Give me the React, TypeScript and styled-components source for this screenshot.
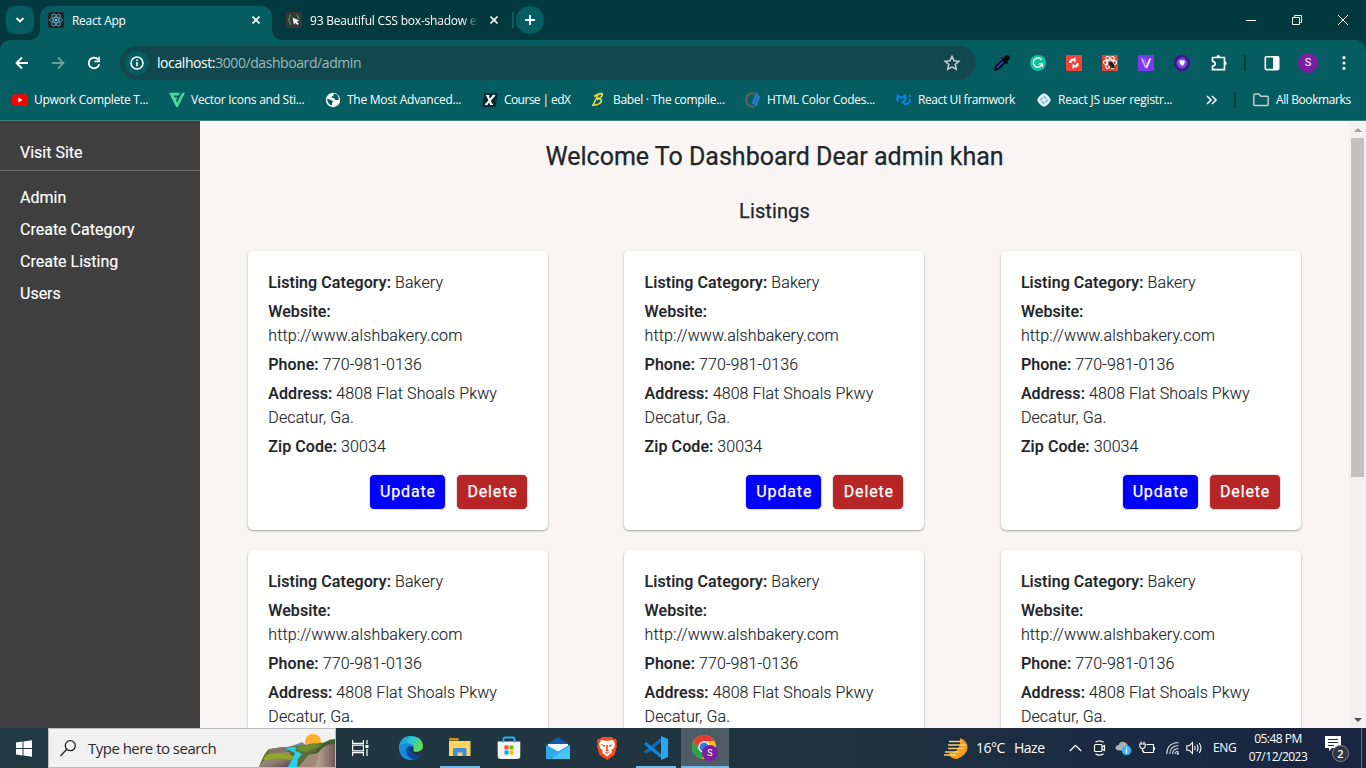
import React from "react";
import styled, { createGlobalStyle } from "styled-components";

const GlobalStyle = createGlobalStyle`
  *, *::before, *::after { box-sizing: border-box; }
  html, body { margin: 0; padding: 0; overflow: hidden; }
  p, h1, h2 { margin: 0; }
  svg { display: block; flex: none; }
`;

const ui = `"Open Sans", "Noto Sans", sans-serif`;

const Screen = styled.div`
  width: 1366px;
  height: 768px;
  display: flex;
  flex-direction: column;
  overflow: hidden;
  font-family: ${ui};
`;

/* ---------- browser chrome ---------- */

const TabStrip = styled.div`
  height: 40px;
  flex: none;
  display: flex;
  background: #02393e;
`;

const TabSearch = styled.div`
  width: 28px;
  height: 28px;
  margin: 6px 6px 0;
  border-radius: 9px;
  background: #055c61;
  display: grid;
  place-items: center;
`;

const Tab = styled.div<{ $active?: boolean; $width: number }>`
  position: relative;
  width: ${(p) => p.$width}px;
  height: ${(p) => (p.$active ? 34 : 28)}px;
  margin-top: 6px;
  padding: ${(p) => (p.$active ? "0 12px 0 8px" : "0 8px 0 14px")};
  display: flex;
  align-items: flex-start;
  border-radius: 10px 10px 0 0;
  background: ${(p) => (p.$active ? "#055c61" : "transparent")};
  color: #fff;
  ${(p) =>
    p.$active &&
    `
  &::before, &::after {
    content: "";
    position: absolute;
    bottom: 0;
    width: 10px;
    height: 10px;
  }
  &::before {
    left: -10px;
    background: radial-gradient(circle at 0 0, transparent 9.5px, #055c61 10px);
  }
  &::after {
    right: -10px;
    background: radial-gradient(circle at 100% 0, transparent 9.5px, #055c61 10px);
  }`}
  > svg { margin-top: 6px; }
`;

const TabTitle = styled.span<{ $fade?: boolean; $spacing: number }>`
  flex: 1;
  margin-left: 8px;
  height: 28px;
  line-height: 29px;
  font-size: 12px;
  letter-spacing: ${(p) => p.$spacing}px;
  white-space: nowrap;
  overflow: hidden;
  ${(p) => p.$fade && `mask-image: linear-gradient(90deg, #000 152px, transparent 169px);`}
`;

const TabDivider = styled.i`
  width: 2px;
  height: 16px;
  margin: 12px 2px 0 6px;
  background: #055c61;
`;

const NewTab = styled.div`
  width: 28px;
  height: 28px;
  margin-top: 6px;
  border-radius: 50%;
  background: #055c61;
  display: grid;
  place-items: center;
`;

const WindowButtons = styled.div`
  margin-left: auto;
  display: flex;
`;

const WindowButton = styled.div`
  width: 46px;
  height: 40px;
  display: grid;
  place-items: center;
`;

const ToolbarBack = styled.div`
  flex: none;
  background: #02393e;
`;

const Toolbar = styled.div`
  height: 46px;
  display: flex;
  align-items: center;
  background: #055c61;
  border-radius: 10px 10px 0 0;
  padding: 0 14px;
`;

const NavIcon = styled.div`
  width: 16px;
  margin-right: 20px;
`;

const AddressBar = styled.div`
  width: 856px;
  height: 34px;
  margin-left: -2px;
  padding: 0 15px 0 5px;
  display: flex;
  align-items: center;
  border-radius: 17px;
  background: #10484e;
`;

const SiteInfo = styled.div`
  width: 24px;
  height: 24px;
  border-radius: 50%;
  background: #055c61;
  display: grid;
  place-items: center;
`;

const Url = styled.span`
  flex: 1;
  margin-left: 8px;
  font-size: 14px;
  line-height: 20px;
  letter-spacing: -0.42px;
  color: #9fb9bb;
  b { font-weight: 400; color: #fff; }
`;

const Extensions = styled.div`
  margin-left: 18px;
  display: flex;
  align-items: center;
  gap: 20px;
`;

const ToolbarDivider = styled.i<{ $left: number; $right: number }>`
  width: 2px;
  height: 16px;
  flex: none;
  margin: 0 ${(p) => p.$right}px 0 ${(p) => p.$left}px;
  background: #02393e;
`;

const Avatar = styled.div`
  width: 20px;
  height: 20px;
  margin: 0 24px 0 18px;
  border-radius: 50%;
  background: #7b1fa2;
  color: #fff;
  font: 11px/20px Roboto, sans-serif;
  text-align: center;
`;

const Bookmarks = styled.div`
  height: 35px;
  flex: none;
  padding: 0 0 7px 12px;
  display: flex;
  align-items: center;
  background: #055c61;
  border-bottom: 1px solid #3a8085;
  color: #fff;
`;

const Bookmark = styled.div`
  display: flex;
  align-items: center;
  gap: 6px;
  margin-right: 21px;
`;

const BookmarkText = styled.span<{ $width: number; $spacing: number }>`
  width: ${(p) => p.$width}px;
  font-size: 12px;
  line-height: 16px;
  letter-spacing: ${(p) => p.$spacing}px;
  white-space: nowrap;
`;

/* ---------- dashboard page ---------- */

const Page = styled.div`
  height: 607px;
  flex: none;
  display: flex;
  font-family: Roboto, sans-serif;
  background: #f9f5f4;
  overflow: hidden;
`;

const Sidebar = styled.nav`
  width: 200px;
  flex: none;
  padding-top: 20px;
  background: #3f3f3f;
  color: #fff;
  font-size: 16px;
  line-height: 24px;
  -webkit-text-stroke: 0.15px;
`;

const SideLink = styled.div`
  padding-left: 20px;
  margin-bottom: 8px;
`;

const SideHead = styled(SideLink)`
  height: 30px;
  margin-bottom: 15px;
  border-bottom: 1px solid #6c6c6c;
`;

const Main = styled.main`
  width: 1149px;
  flex: none;
  color: #212529;
  overflow: hidden;
`;

const Title = styled.h1`
  margin-top: 20px;
  text-align: center;
  font-size: 25px;
  font-weight: 400;
  line-height: 32px;
  -webkit-text-stroke: 0.25px;
`;

const Subtitle = styled.h2`
  margin: 26px 0 28px;
  text-align: center;
  font-size: 20px;
  font-weight: 400;
  line-height: 24px;
  letter-spacing: 0.1px;
  -webkit-text-stroke: 0.25px;
`;

const Cards = styled.div`
  padding-left: 48px;
  display: grid;
  grid-template-columns: repeat(3, 300px);
  gap: 20px 76.3px;
`;

const Card = styled.article`
  height: 279px;
  padding: 20px;
  border-radius: 5px;
  background: #fff;
  box-shadow: rgba(0, 0, 0, 0.12) 0 1px 3px, rgba(0, 0, 0, 0.24) 0 1px 2px;
`;

const Field = styled.p`
  margin-bottom: 5px;
  padding-left: 0.3px;
  font-size: 16px;
  font-weight: 300;
  line-height: 24px;
  letter-spacing: 0.11px;
  -webkit-text-stroke: 0.15px;
  b { font-weight: 500; letter-spacing: 0.08px; }
`;

const Actions = styled.div`
  margin-top: 15px;
  display: flex;
  justify-content: flex-end;
  gap: 10px;
`;

const Action = styled.button<{ $color: string; $width: number }>`
  width: ${(p) => p.$width}px;
  height: 36px;
  padding: 0 0 0 1px;
  border: 1px solid #e4e4e4;
  border-radius: 5px;
  background: ${(p) => p.$color};
  color: #fff;
  font: 400 16px/24px Roboto, sans-serif;
  letter-spacing: 0.85px;
  -webkit-text-stroke: 0.25px;
`;

const Scrollbar = styled.div`
  width: 17px;
  flex: none;
  display: flex;
  flex-direction: column;
  align-items: center;
  background: #f1f1f1;
`;

const ScrollArrow = styled.div`
  height: 17px;
  display: grid;
  place-items: center;
`;

const ScrollThumb = styled.div`
  width: 13px;
  height: 339px;
  margin-bottom: auto;
  background: #c1c1c1;
`;

/* ---------- taskbar ---------- */

const Taskbar = styled.div`
  height: 40px;
  flex: none;
  display: flex;
  align-items: center;
  background: linear-gradient(90deg, #213a43, #20343f 55%, #1b2942 85%, #1a2541);
  color: #fff;
`;

const StartButton = styled.div`
  width: 48px;
  padding-left: 16px;
`;

const SearchBox = styled.div`
  width: 288px;
  height: 40px;
  padding-left: 11px;
  display: flex;
  align-items: center;
  border: 1px solid #b9bdc0;
  background: #f1f1f1;
  color: #2a2a2a;
  font-size: 15px;
  letter-spacing: -0.52px;
  span { margin-left: 12px; flex: 1; white-space: nowrap; }
`;

const TaskItem = styled.div<{ $running?: boolean; $active?: boolean }>`
  width: 48px;
  height: 40px;
  margin-right: 1px;
  display: grid;
  place-items: center;
  background: ${(p) =>
    p.$running
      ? `linear-gradient(#76b9ed, #76b9ed) center bottom / ${p.$active ? 48 : 40}px 2px no-repeat, ${p.$active ? "#4e5d65" : "transparent"}`
      : "transparent"};
`;

const TaskApps = styled.div`
  margin-left: 2px;
  display: flex;
`;

const Tray = styled.div`
  margin-left: auto;
  height: 40px;
  display: flex;
  align-items: center;
`;

const TrayText = styled.span<{ $width: number; $gap: number; $size: number; $spacing: number }>`
  width: ${(p) => p.$width}px;
  margin-right: ${(p) => p.$gap}px;
  font-size: ${(p) => p.$size}px;
  letter-spacing: ${(p) => p.$spacing}px;
  line-height: 18px;
  white-space: nowrap;
`;

const TrayIcon = styled.div<{ $width: number; $gap: number }>`
  width: ${(p) => p.$width}px;
  margin-right: ${(p) => p.$gap}px;
`;

const Clock = styled.div`
  width: 60px;
  margin-right: 17px;
  display: flex;
  flex-direction: column;
  align-items: center;
  font-size: 12px;
  line-height: 18px;
  letter-spacing: -0.5px;
  white-space: nowrap;
`;

const Notifications = styled.div`
  position: relative;
  width: 24px;
  height: 24px;
  margin-right: 12px;
`;

const NotificationCount = styled.span`
  position: absolute;
  left: 7px;
  top: 9px;
  width: 17px;
  height: 17px;
  border: 1px solid #848890;
  border-radius: 50%;
  background: #333840;
  font-size: 11px;
  font-weight: 600;
  line-height: 15px;
  text-align: center;
`;

const ShowDesktop = styled.i`
  width: 5px;
  height: 40px;
  border-left: 1px solid #6a7385;
`;

/* ---------- icons ---------- */

const ReactIcon = () => (
  <svg width="16" height="16" viewBox="0 0 16 16">
    <rect width="16" height="16" rx="2" fill="#222326" />
    <g fill="none" stroke="#5aa7c0" strokeWidth=".9">
      <ellipse cx="8" cy="8" rx="6.6" ry="2.5" />
      <ellipse cx="8" cy="8" rx="6.6" ry="2.5" transform="rotate(60 8 8)" />
      <ellipse cx="8" cy="8" rx="6.6" ry="2.5" transform="rotate(120 8 8)" />
    </g>
    <circle cx="8" cy="8" r="1.3" fill="#61dafb" />
  </svg>
);

const BracesIcon = () => (
  <svg width="16" height="16" viewBox="0 0 16 16">
    <rect width="16" height="16" rx="3" fill="#3a3638" />
    <path d="M5 3C3 3 4.5 7 2.4 7.5 4.5 8 3 12.5 5 12.5M10.5 3c2 0 .8 3 2.5 4" fill="none" stroke="#2f9a56" strokeWidth="1.5" />
    <path d="M6.5 5.5l7 3.2-2.7.9 2 2.2-1.4 1.3-2-2.3-1.4 2z" fill="#fff" />
  </svg>
);

const CloseIcon = () => (
  <svg width="8" height="16" viewBox="0 0 8 16">
    <path d="M.5 4.5l7 7m0-7l-7 7" stroke="#fff" strokeWidth="1.6" />
  </svg>
);

const Caret = () => (
  <svg width="10" height="8" viewBox="0 0 10 8">
    <path d="M1.5 2L5 5.5 8.5 2" fill="none" stroke="#fff" strokeWidth="1.8" />
  </svg>
);

const Arrow = ({ forward }: { forward?: boolean }) => (
  <svg width="16" height="16" viewBox="0 0 16 16">
    <path
      d={forward ? "M2 8h11M8 2.5L13.5 8 8 13.5" : "M14 8H3M8 2.5L2.5 8 8 13.5"}
      fill="none"
      stroke={forward ? "#6c9fa2" : "#fff"}
      strokeWidth="1.8"
    />
  </svg>
);

const Reload = () => (
  <svg width="16" height="16" viewBox="0 0 16 16">
    <path d="M13.2 9.2A5.3 5.3 0 1 1 12.2 4.7" fill="none" stroke="#fff" strokeWidth="1.8" />
    <path d="M13.9 1.8v5.4H8.5V5.6h3.8V1.8z" fill="#fff" />
  </svg>
);

const Info = () => (
  <svg width="14" height="14" viewBox="0 0 14 14">
    <circle cx="7" cy="7" r="6" fill="none" stroke="#fff" strokeWidth="1.6" />
    <path d="M7 6v4.3M7 3.4v1.6" stroke="#fff" strokeWidth="1.6" />
  </svg>
);

const Star = () => (
  <svg width="18" height="18" viewBox="0 0 18 18">
    <path d="M9 2.3l2 4.5 4.9.5-3.7 3.2 1.1 4.8L9 12.8l-4.3 2.5 1.1-4.8-3.7-3.2 4.9-.5z" fill="none" stroke="#c3cfd0" strokeWidth="1.5" />
  </svg>
);

const Dropper = () => (
  <svg width="16" height="16" viewBox="0 0 16 16">
    <path d="M1.3 14.7l.5-3L9 4.7 11.3 7l-7 7z" fill="#3149d8" stroke="#03080e" strokeWidth="1.8" />
    <path d="M7 3l1.3-1 1.4 1 2-2.3Q13.5-.4 15 1t.2 3.2L13 6.5l1 1.3L12.8 9z" fill="#03080e" />
  </svg>
);

const Grammar = () => (
  <svg width="16" height="16" viewBox="0 0 16 16">
    <circle cx="8" cy="8" r="8" fill="#15c39a" />
    <path d="M11.6 4.8A4.6 4.6 0 1 0 12.3 9H9m3.4 0v3" fill="none" stroke="#fff" strokeWidth="1.3" />
  </svg>
);

const SwapExt = () => (
  <svg width="16" height="16" viewBox="0 0 16 16">
    <rect width="16" height="16" rx="1" fill="#f0443a" />
    <path d="M7.5 4.5Q4 5 4.3 8M8.5 11.5Q12 11 11.7 8" fill="none" stroke="#fff" strokeWidth="2.2" />
    <path d="M6.5 4.8L9.5 2v5.4zM9.5 11.2l-3 2.8V8.6z" fill="#fff" />
  </svg>
);

const ReactDev = () => (
  <svg width="16" height="16" viewBox="0 0 16 16">
    <rect width="16" height="16" fill="#da4a36" />
    <g fill="none" stroke="#fff" strokeWidth="1.1">
      <ellipse cx="8" cy="7.5" rx="6.6" ry="2.6" />
      <ellipse cx="8" cy="7.5" rx="6.6" ry="2.6" transform="rotate(60 8 7.5)" />
      <ellipse cx="8" cy="7.5" rx="6.6" ry="2.6" transform="rotate(120 8 7.5)" />
    </g>
    <ellipse cx="9.8" cy="10" rx="2.3" ry="3.4" fill="#301a18" transform="rotate(-35 9.8 10)" />
    <path d="M6 9.5l6.5 3M11 7L8 13.5M7.5 7l5.5 6" stroke="#301a18" strokeWidth=".8" />
  </svg>
);

const VExt = () => (
  <svg width="16" height="16" viewBox="0 0 16 16">
    <rect width="16" height="16" rx="1" fill="#7c3aed" />
    <path d="M3.8 3.5l3.8 9" stroke="#c9b0f8" strokeWidth="1.8" />
    <path d="M12.3 3.5L8.3 12.8" stroke="#fff" strokeWidth="1.8" />
    <path d="M6.5 4l2 5" stroke="#a883f3" strokeWidth="1" />
  </svg>
);

const HeartExt = () => (
  <svg width="16" height="16" viewBox="0 0 16 16">
    <circle cx="8" cy="8" r="8" fill="#40128b" />
    <circle cx="8" cy="8" r="5.3" fill="#7754d8" stroke="#5b2fc4" />
    <path d="M5 6q1.5-1 3-.8 1.800-.2 3 .8-.5 3.200-2.500 5Q6 9.500 5 6z" fill="#fff" />
  </svg>
);

const Puzzle = () => (
  <svg width="18" height="18" viewBox="0 0 18 18">
    <path d="M2.5 3.5h12v12.2h-12v-3.500q2.600-.2 2.600-2.400t-2.600-2.400z" fill="none" stroke="#fff" strokeWidth="1.7" strokeLinejoin="round" />
    <path d="M6.300 3.500a2 2.600 0 0 1 4 0zM14.500 7.400a2.300 1.900 0 0 1 0 3.800z" fill="#fff" />
  </svg>
);

const SidePanel = () => (
  <svg width="16" height="16" viewBox="0 0 16 16">
    <rect x="1.3" y="1.8" width="13.4" height="12.8" rx="1" fill="none" stroke="#fff" strokeWidth="1.6" />
    <path d="M9 1.5h5.500v13H9z" fill="#fff" />
  </svg>
);

const Dots = () => (
  <svg width="4" height="16" viewBox="0 0 4 16" fill="#fff">
    <circle cx="2" cy="2.7" r="1.6" />
    <circle cx="2" cy="8" r="1.6" />
    <circle cx="2" cy="13.3" r="1.6" />
  </svg>
);

const YouTube = () => (
  <svg width="16" height="16" viewBox="0 0 16 16">
    <rect y="2.3" width="16" height="11.4" rx="3" fill="#f00" />
    <path d="M6.3 5.6v4.8L10.6 8z" fill="#fff" />
  </svg>
);

const VectorMark = () => (
  <svg width="16" height="16" viewBox="0 0 16 16">
    <path d="M0 .8h11L9.500 3.500H4.600l1 2h3L7.500 7.800H6.800l1.300 3 5-10H16L8.800 15H7.200z" fill="#4ddb98" />
  </svg>
);

const Globe = () => (
  <svg width="16" height="16" viewBox="0 0 16 16">
    <circle cx="8" cy="8" r="7.2" fill="#fff" />
    <path d="M2 6.5l4.500 1.700 2 1.600-1.500 1v2.700Q2.500 12.500 2 6.500M9.800 1.600Q8 2.500 8.200 4 6 4 6.500 6q1.500-.5 3 .5l.8 1.500h3.500Q14 3 9.800 1.600" fill="#075b60" />
  </svg>
);

const EdX = () => (
  <svg width="16" height="16" viewBox="0 0 16 16">
    <path d="M2.500 1H16l-2.500 14H0z" fill="#062b33" />
    <path d="M5.500 3.500l3.700 9M12.500 3L3.800 12.800" stroke="#fff" strokeWidth="2" fill="none" />
    <path d="M4 3.700h3.200M10.500 3.500h2.700M3 12.300h2.500M8 12.300h3" stroke="#fff" strokeWidth="1.2" />
  </svg>
);

const Babel = () => (
  <svg width="16" height="16" viewBox="0 0 16 16">
    <path d="M1.500 14L6.800 3.500M3 4.500Q8 1 11.300 1.800q.7 3.200-5.500 5.400 5-.8 4.700 1.700Q10 12.500 2 13.200" fill="none" stroke="#f5da3c" strokeWidth="1.6" />
  </svg>
);

const ColorCodes = () => (
  <svg width="16" height="16" viewBox="0 0 16 16">
    <path d="M9.500 1.500A6.700 6.700 0 1 0 9 14.600" fill="none" stroke="#575e62" strokeWidth="2.6" />
    <path d="M12 1L7.800 12M14.200 3.500L10.300 14" stroke="#3079c8" strokeWidth="2.5" />
  </svg>
);

const Mui = () => (
  <svg width="16" height="16" viewBox="0 0 16 16">
    <path d="M1.500 9.500V3.500l3.800 2.300L9.200 3.500v5L6.500 10.300l3.200 2.200 4.200-2.500V7M13.900 3v2" fill="none" stroke="#1083f0" strokeWidth="1.9" />
  </svg>
);

const DiamondMark = () => (
  <svg width="16" height="16" viewBox="0 0 16 16">
    <path d="M8 1.300q2 .2 4 2.500Q14.500 6 14.700 8q-.2 2-2.700 4.200-2 2.300-4 2.500-2-.2-4-2.500Q1.500 10 1.300 8q.2-2 2.700-4.200 2-2.300 4-2.500z" fill="#e3f1fa" />
    <path d="M8 4.800L11.200 8 8 11.200 4.800 8z" fill="none" stroke="#6eb2e0" strokeWidth="1.7" strokeDasharray="3 1.500" />
    <circle cx="8" cy="8" r="1.5" fill="#fff" />
  </svg>
);

const Overflow = () => (
  <svg width="24" height="12" viewBox="-12 0 24 12">
    <path d="M1 2l4 4-4 4M6 2l4 4-4 4" fill="none" stroke="#fff" strokeWidth="1.6" />
  </svg>
);

const Folder = () => (
  <svg width="18" height="16" viewBox="0 0 18 16">
    <path d="M1.800 3q0-1 1-1h4l2 2.200h6.400q1 0 1 1v7.300q0 1-1 1H2.800q-1 0-1-1z" fill="none" stroke="#c3cfd0" strokeWidth="1.5" />
  </svg>
);

const WindowsLogo = () => (
  <svg width="16" height="17" viewBox="0 0 16 17" fill="#fff">
    <path d="M0 2.500L6.500 1.600V8H0zM7.500 1.400L16 .2V8H7.500zM0 9h6.500v6.400L0 14.500zM7.500 9H16v7.800l-8.500-1.200z" />
  </svg>
);

const SearchIcon = () => (
  <svg width="16" height="17" viewBox="0 0 16 17" fill="none" stroke="#222" strokeWidth="1.3">
    <circle cx="10.3" cy="5.7" r="5" />
    <path d="M6.800 9.300L.5 16" />
  </svg>
);

const Landscape = () => (
  <svg width="76" height="38" viewBox="0 0 76 38">
    <defs>
      <linearGradient id="rock" x1="0" x2="1" y2="1">
        <stop offset="0" stopColor="#b7a391" />
        <stop offset=".6" stopColor="#8b7870" />
        <stop offset="1" stopColor="#47404a" />
      </linearGradient>
      <linearGradient id="cliff" x1="0" x2="1">
        <stop offset="0" stopColor="#62504b" />
        <stop offset=".5" stopColor="#b9a091" />
        <stop offset="1" stopColor="#705b55" />
      </linearGradient>
    </defs>
    <circle cx="54" cy="13" r="8" fill="#ffae2d" />
    <path d="M24 20L38 15l5-2 4 3 7-2 8 2 10-2 4 10-30 8-20-4z" fill="#7b899c" />
    <path d="M10 20L27 18l20-2 29-4v26H0Q5 24 10 20z" fill="#5b6f35" />
    <path d="M9 26q12-4 21-3l5 8-3 7H0z" fill="url(#rock)" />
    <path d="M11 20l12-2 8 3-8 3-14 1z" fill="#8a7468" />
    <path d="M7 26q15-5 29 2l-5 3q-9-3-27 0z" fill="#93a725" />
    <path d="M58 23q8-11 18-8v23H41z" fill="url(#cliff)" />
    <path d="M43 34l8-10 9 1-4 13H39z" fill="#a08a7a" />
    <path d="M38 18l16-3 9 1-15 7-8-1z" fill="#708d30" />
    <path d="M26 19q10-2 12 0-4 3 1 4l4 2-4 5-1 8h-9l5-9 2-5-6-3z" fill="#25d0ea" />
    <path d="M57 22Q66 10 76 10v5Q66 14 59 24l-12 2z" fill="#41612a" />
  </svg>
);

const TaskView = () => (
  <svg width="17" height="16" viewBox="0 0 17 16" fill="none" stroke="#fff" strokeWidth="1.2">
    <path d="M.6 0v3.400h10.800V0M.6 16v-3.400h10.800V16M.6 5.200h10.800v5.600H.6zM15 0v4M15 9v7" />
    <path d="M13.500 5h3v3h-3z" fill="#fff" stroke="none" />
  </svg>
);

const Edge = () => (
  <svg width="24" height="24" viewBox="0 0 24 24">
    <defs>
      <linearGradient id="edgeTop" x1="0" x2="1" y2=".4">
        <stop offset="0" stopColor="#1689d8" />
        <stop offset=".5" stopColor="#2bc3d8" />
        <stop offset="1" stopColor="#62dc50" />
      </linearGradient>
    </defs>
    <circle cx="12" cy="12" r="12" fill="#0c6fc4" />
    <path d="M0 11Q1 0 12 0t12 10q0 6-7 6-4 0-2.500-3 .5-5-5-5.500Q3 7 0 13z" fill="url(#edgeTop)" />
    <path d="M8 12.500Q6 20 14 23.500q6-1 9-6-4 2.500-8.500 1T11 13.500q0-2 1.500-3Q9 9.500 8 12.500z" fill="#0b4a9b" />
    <path d="M14.500 13Q13 16 17 16t7-3.500v5q-4 2.500-8.500 1T11.200 13.500q0-2 1.800-3 2 1 1.500 2.500z" fill="#20343f" />
    <path d="M0 12Q2 6.500 9 7.500q3 0 4 2.500-6-.5-6.500 4.500 0 6 7.500 9Q1 25 0 12z" fill="#1c8bdc" />
  </svg>
);

const Explorer = () => (
  <svg width="22" height="20" viewBox="0 0 22 20">
    <path d="M0 1q0-1 1-1h8l1 2.500H0z" fill="#d9960b" />
    <path d="M0 3h21.500v15H0z" fill="#ffd45c" />
    <path d="M4 11.500q0-1.500 1.500-1.500h10.500q1.500 0 1.500 1.500V18h-4v-3.500h-5V18H4z" fill="#3b8fdb" />
  </svg>
);

const Store = () => (
  <svg width="24" height="24" viewBox="0 0 24 24">
    <path d="M.7 5.500h22.600V20q0 3-3 3H3.700q-3 0-3-3z" fill="#f3f3f3" />
    <path d="M6.500 6.500V3q0-1.500 1.500-1.500h8q1.500 0 1.500 1.500v3.500" fill="none" stroke="#29b2ed" strokeWidth="1.8" />
    <path d="M7.500 9.500h4v4h-4z" fill="#f25022" />
    <path d="M12.500 9.500h4v4h-4z" fill="#7fba00" />
    <path d="M7.500 14.500h4v4h-4z" fill="#00a4ef" />
    <path d="M12.500 14.500h4v4h-4z" fill="#ffb900" />
  </svg>
);

const Mail = () => (
  <svg width="24" height="23" viewBox="0 0 24 23">
    <path d="M0 8L12 0l12 8v4H0z" fill="#0b5cad" />
    <path d="M2 7h20v2L12 15 2 9z" fill="#f4f7fa" />
    <path d="M0 8l12 6.500L24 8v14H0z" fill="#2fa9ec" />
    <path d="M24 8L5 22h19z" fill="#45c4f6" />
  </svg>
);

const Brave = () => (
  <svg width="22" height="24" viewBox="0 0 22 24">
    <path d="M6 1h10l2 2 2-.3L21 6l-.6 2 .6 2-2.600 9L11 24l-7.400-5L1 10l.6-2L1 6l1-3.300L4 3z" fill="#fb4b1d" />
    <path d="M5 4l6 1 6-1 2 4-1 4-2.500 2 .5 2.500L11 20.500 6 16.500l.5-2.500L4 12 3 8z" fill="#fff" />
    <path d="M5 8l4 1.300-.5 2.300zM17 8l-4 1.300.5 2.300zM10 9h2l-.3 4.300L13 14l-2 1.500L9 14l1.300-.7zM8 15.500l3 1 3-1-3 2.500z" fill="#fb4b1d" />
  </svg>
);

const VsCode = () => (
  <svg width="24" height="24" viewBox="0 0 24 24">
    <path d="M1 16.800L17.500 3.500" stroke="#0a6fba" strokeWidth="3.2" />
    <path d="M1 7.200L17.500 20.500" stroke="#0f87d4" strokeWidth="3.2" />
    <path d="M17 0l7 3v18l-7 3z" fill="#29a8f2" />
  </svg>
);

const Chrome = () => (
  <svg width="26" height="26" viewBox="0 0 26 26">
    <circle cx="12" cy="12" r="12" fill="#fbc116" />
    <path d="M1.600 6A12 12 0 0 1 22.400 6H12L7 15z" fill="#e63b30" />
    <path d="M1.600 6l5.200 9L12 18l-2 6A12 12 0 0 1 1.600 6z" fill="#2ba24c" />
    <circle cx="12" cy="12" r="5.8" fill="#fff" />
    <circle cx="12" cy="12" r="4.5" fill="#2f7de1" />
    <circle cx="18" cy="18" r="8" fill="#7b1fa2" />
    <text x="18" y="21.3" fill="#fff" fontFamily="Roboto, sans-serif" fontSize="9" textAnchor="middle">S</text>
  </svg>
);

const Haze = () => (
  <svg width="25" height="23" viewBox="0 0 25 23">
    <path d="M16 1q8 3 7.500 10T13 22Q7 22 4 17l8-3q5-4 4-13z" fill="#f79a20" />
    <path d="M5 4.500h13M4 8h18M4 11.500h16M1 15h14M0 18h12" stroke="#fbd06f" strokeWidth="1.5" />
  </svg>
);

const TrayChevron = () => (
  <svg width="13" height="8" viewBox="0 0 13 8">
    <path d="M.8 7L6.500 1.300 12.200 7" fill="none" stroke="#fff" strokeWidth="1.3" />
  </svg>
);

const MeetNow = () => (
  <svg width="13" height="16" viewBox="0 0 13 16" fill="none" stroke="#fff" strokeWidth="1.2">
    <rect x="1.5" y="4.5" width="7.5" height="7" rx="1" />
    <path d="M9 7l2.500-1.500v5L9 9M2.500 2.300q4-3 8 0M2.500 13.700q4 3 8 0" />
  </svg>
);

const Cloud = () => (
  <svg width="17" height="16" viewBox="0 0 17 16">
    <path d="M3.500 10.500Q0 10 .6 7q.6-2 3-2Q5 1 9 2q3 .5 3.500 3.500 3 1 2.500 5z" fill="#a9afb5" />
    <circle cx="11.5" cy="10.5" r="4.8" fill="#3daee9" />
    <path d="M11.500 9.500v4M11.500 7.300v1.300" stroke="#fff" strokeWidth="1.4" />
  </svg>
);

const Battery = () => (
  <svg width="17" height="14" viewBox="0 0 17 14" fill="none" stroke="#fff" strokeWidth="1.1">
    <path d="M7.500 3.500h7v8H4.500V9.500M15.500 6v3M2 .5V3M5 .5V3M.8 3h5.400v2.500q-.5 2-2.700 2t-2.700-2zM3.500 7.500v3" />
  </svg>
);

const Wifi = () => (
  <svg width="13" height="14" viewBox="0 0 13 14" fill="none" stroke="#d4d9e0" strokeWidth="1.1">
    <path d="M.7 13Q1 2 12.500 1.500M3.700 13Q4 5 12.500 4.500M6.500 13q0-5 6-5.500M9 13q0-2.500 3.500-2.700" />
    <circle cx="11.8" cy="12.5" r=".7" fill="#fff" />
  </svg>
);

const Sound = () => (
  <svg width="17" height="14" viewBox="0 0 17 14" fill="none" stroke="#fff" strokeWidth="1.1">
    <path d="M.8 4.800h2.400L6.500 1.500v11L3.200 9.200H.8zM8.500 5q1.300 2 0 4M10.800 3.500q2.500 3.500 0 7M13.200 2q3.500 5 0 10" />
  </svg>
);

const Message = () => (
  <svg width="16" height="16" viewBox="0 0 16 16">
    <path d="M0 0h16v12H7l-3 3v-3H0z" fill="#fff" />
    <path d="M3 3.500h10M3 6.500h10M3 9.500h6" stroke="#1b2942" strokeWidth="1" />
  </svg>
);

/* ---------- content ---------- */

const bookmarks = [
  { icon: <YouTube />, label: "Upwork Complete T...", width: 114, spacing: -0.3 },
  { icon: <VectorMark />, label: "Vector Icons and Sti...", width: 113, spacing: -0.27 },
  { icon: <Globe />, label: "The Most Advanced...", width: 114, spacing: -0.25 },
  { icon: <EdX />, label: "Course | edX", width: 66, spacing: -0.58 },
  { icon: <Babel />, label: "Babel · The compile...", width: 111, spacing: -0.3 },
  { icon: <ColorCodes />, label: "HTML Color Codes...", width: 108, spacing: -0.25 },
  { icon: <Mui />, label: "React UI framwork", width: 97, spacing: -0.4 },
  { icon: <DiamondMark />, label: "React JS user registr...", width: 115, spacing: -0.25 },
];

const listing = [
  { name: "Listing Category:", value: "Bakery" },
  { name: "Website:", value: "http://www.alshbakery.com", ownLine: true },
  { name: "Phone:", value: "770-981-0136" },
  { name: "Address:", value: "4808 Flat Shoals Pkwy Decatur, Ga." },
  { name: "Zip Code:", value: "30034" },
];

const ListingCard = () => (
  <Card>
    {listing.map(({ name, value, ownLine }) => (
      <Field key={name}>
        <b>{name}</b>
        {ownLine ? <br /> : " "}
        {value}
      </Field>
    ))}
    <Actions>
      <Action $color="#0000ff" $width={77}>Update</Action>
      <Action $color="#b72626" $width={72}>Delete</Action>
    </Actions>
  </Card>
);

export default function App() {
  return (
    <Screen>
      <GlobalStyle />
      <TabStrip>
        <TabSearch><Caret /></TabSearch>
        <Tab $active $width={232}>
          <ReactIcon />
          <TabTitle $spacing={-0.3}>React App</TabTitle>
          <CloseIcon />
        </Tab>
        <Tab $width={234}>
          <BracesIcon />
          <TabTitle $fade $spacing={-0.2}>93 Beautiful CSS box-shadow examples</TabTitle>
          <CloseIcon />
        </Tab>
        <TabDivider />
        <NewTab>
          <svg width="12" height="12"><path d="M6 1v10M1 6h10" stroke="#fff" strokeWidth="1.8" /></svg>
        </NewTab>
        <WindowButtons>
          <WindowButton><svg width="10" height="10"><path d="M0 5.500h10" stroke="#fff" /></svg></WindowButton>
          <WindowButton>
            <svg width="10" height="10" fill="none" stroke="#fff"><path d="M.5 2.500h7v7h-7zM2.500 2.500v-2h7v7h-2" /></svg>
          </WindowButton>
          <WindowButton><svg width="10" height="10"><path d="M0 0l10 10M10 0L0 10" stroke="#fff" /></svg></WindowButton>
        </WindowButtons>
      </TabStrip>
      <ToolbarBack>
        <Toolbar>
          <NavIcon><Arrow /></NavIcon>
          <NavIcon><Arrow forward /></NavIcon>
          <NavIcon><Reload /></NavIcon>
          <AddressBar>
            <SiteInfo><Info /></SiteInfo>
            <Url><b>localhost:</b>3000/dashboard/admin</Url>
            <Star />
          </AddressBar>
          <Extensions>
            <Dropper />
            <Grammar />
            <SwapExt />
            <ReactDev />
            <VExt />
            <HeartExt />
            <Puzzle />
          </Extensions>
          <ToolbarDivider $left={16} $right={18} />
          <SidePanel />
          <Avatar>S</Avatar>
          <Dots />
        </Toolbar>
      </ToolbarBack>
      <Bookmarks>
        {bookmarks.map((b) => (
          <Bookmark key={b.label}>
            {b.icon}
            <BookmarkText $width={b.width} $spacing={b.spacing}>{b.label}</BookmarkText>
          </Bookmark>
        ))}
        <Overflow />
        <ToolbarDivider $left={16} $right={16} />
        <Bookmark>
          <Folder />
          <BookmarkText $width={76} $spacing={-0.4}>All Bookmarks</BookmarkText>
        </Bookmark>
      </Bookmarks>

      <Page>
        <Sidebar>
          <SideHead>Visit Site</SideHead>
          <SideLink>Admin</SideLink>
          <SideLink>Create Category</SideLink>
          <SideLink>Create Listing</SideLink>
          <SideLink>Users</SideLink>
        </Sidebar>
        <Main>
          <Title>Welcome To Dashboard Dear admin khan</Title>
          <Subtitle>Listings</Subtitle>
          <Cards>
            {Array.from({ length: 6 }, (_, i) => (
              <ListingCard key={i} />
            ))}
          </Cards>
        </Main>
        <Scrollbar>
          <ScrollArrow><svg width="8" height="4"><path d="M0 4l4-4 4 4z" fill="#a3a3a3" /></svg></ScrollArrow>
          <ScrollThumb />
          <ScrollArrow><svg width="8" height="4"><path d="M0 0l4 4 4-4z" fill="#505050" /></svg></ScrollArrow>
        </Scrollbar>
      </Page>

      <Taskbar>
        <StartButton><WindowsLogo /></StartButton>
        <SearchBox>
          <SearchIcon />
          <span>Type here to search</span>
          <Landscape />
        </SearchBox>
        <TaskItem><TaskView /></TaskItem>
        <TaskApps>
          <TaskItem><Edge /></TaskItem>
          <TaskItem $running><Explorer /></TaskItem>
          <TaskItem><Store /></TaskItem>
          <TaskItem><Mail /></TaskItem>
          <TaskItem><Brave /></TaskItem>
          <TaskItem $running><VsCode /></TaskItem>
          <TaskItem $running $active><Chrome /></TaskItem>
        </TaskApps>
        <Tray>
          <TrayIcon $width={25} $gap={7}><Haze /></TrayIcon>
          <TrayText $width={30} $gap={8} $size={14} $spacing={-0.5}>16°C</TrayText>
          <TrayText $width={32} $gap={23} $size={14} $spacing={-0.5}>Haze</TrayText>
          <TrayIcon $width={13} $gap={11}><TrayChevron /></TrayIcon>
          <TrayIcon $width={13} $gap={9}><MeetNow /></TrayIcon>
          <TrayIcon $width={17} $gap={7}><Cloud /></TrayIcon>
          <TrayIcon $width={17} $gap={10}><Battery /></TrayIcon>
          <TrayIcon $width={13} $gap={7}><Wifi /></TrayIcon>
          <TrayIcon $width={17} $gap={10}><Sound /></TrayIcon>
          <TrayText $width={24} $gap={11} $size={12} $spacing={-0.4}>ENG</TrayText>
          <Clock>
            <span>05:48 PM</span>
            <span>07/12/2023</span>
          </Clock>
          <Notifications>
            <Message />
            <NotificationCount>2</NotificationCount>
          </Notifications>
          <ShowDesktop />
        </Tray>
      </Taskbar>
    </Screen>
  );
}
